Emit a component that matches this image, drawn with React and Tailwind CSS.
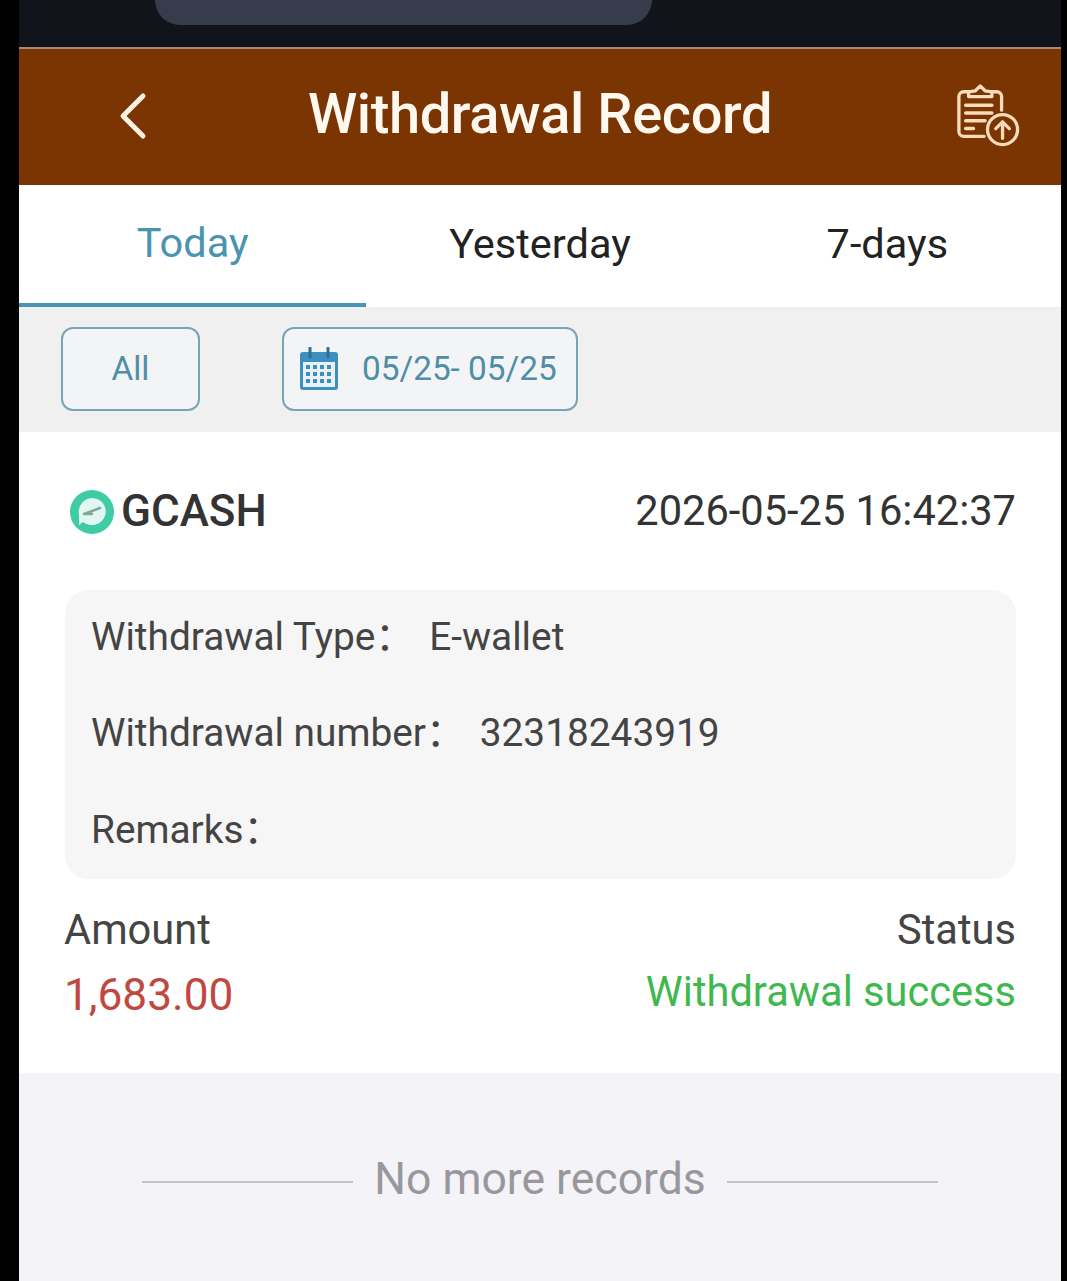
export default function App() {
  return (
    <div className="w-[1067px] h-[1281px] bg-black overflow-hidden flex font-['Roboto',sans-serif]">
      <div className="ml-[19px] w-[1042px] h-full flex flex-col">
        <div className="h-[49px] bg-[#11141a] flex flex-col border-b-2 border-[#a98a72]">
          <div className="ml-[136px] w-[497px] h-[25px] bg-[#363c4c] rounded-b-[40px]" />
        </div>
        <header className="h-[136px] bg-[#7a3503] flex items-center justify-between pl-[97px] pr-[41px] relative">
          <svg width="36" height="50" viewBox="0 0 36 50" fill="none" stroke="#fff4e6" strokeWidth="5" strokeLinecap="round" strokeLinejoin="round" className="-mt-[3px]">
            <path d="M27 5 L7 25 L27 45" />
          </svg>
          <h1 className="absolute left-0 right-0 text-center text-[#fff8ee] text-[56px] leading-[56px] font-medium tracking-[-0.4px] -mt-[7px]">Withdrawal Record</h1>
          <svg width="64" height="64" viewBox="0 0 66 66" fill="none" stroke="#f7dcbc" strokeWidth="3.4" strokeLinecap="round" strokeLinejoin="round" className="-mt-[2px]">
            <path d="M13 8 h-5 a5 5 0 0 0 -5 5 v36 a5 5 0 0 0 5 5 h21" />
            <path d="M37 8 h5 a5 5 0 0 1 5 5 v14" />
            <path d="M13 13 h24 v-5 l-7 -1 l-5 -5 l-5 5 l-7 1 z" />
            <path d="M10 22 h27 M10 30 h27 M10 38 h20 M10 46 h8" strokeWidth="3.6" />
            <circle cx="48" cy="47" r="15.5" />
            <path d="M48 56 v-17 M41 46 l7 -7 l7 7" />
          </svg>
        </header>
        <nav className="h-[122px] bg-white grid grid-cols-3 text-[41.5px] text-[#222222]">
          <div className="flex items-center justify-center border-b-[4px] border-[#4b93b4] text-[#4a94af] pb-[1px]">Today</div>
          <div className="flex items-center justify-center pb-[3px]">Yesterday</div>
          <div className="flex items-center justify-center pb-[3px]">7-days</div>
        </nav>
        <div className="h-[125px] bg-[#f0f0f0] flex items-center pl-[42px] gap-[82px] text-[#4f8ea6] text-[33.3px] pb-[2px]">
          <div className="w-[139px] h-[84px] border-2 border-[#78a5b5] rounded-[12px] flex items-center justify-center bg-[#f2f4f5]">All</div>
          <div className="w-[296px] h-[84px] border-2 border-[#78a5b5] rounded-[12px] flex items-center pl-[15px] gap-[23px] bg-[#f2f4f5]">
            <svg width="40" height="44" viewBox="0 0 40 44" className="shrink-0">
              <rect x="1" y="5" width="38" height="38" rx="3" fill="#3c8fbe" />
              <rect x="4" y="15" width="32" height="25" fill="#e8f3f9" />
              <path d="M11 1 v9 M29 1 v9" stroke="#2f6f96" strokeWidth="3" strokeLinecap="round" />
              <g fill="#3c8fbe">
                <rect x="7" y="18" width="4" height="4" /><rect x="14" y="18" width="4" height="4" /><rect x="21" y="18" width="4" height="4" /><rect x="28" y="18" width="4" height="4" />
                <rect x="7" y="25" width="4" height="4" /><rect x="14" y="25" width="4" height="4" /><rect x="21" y="25" width="4" height="4" /><rect x="28" y="25" width="4" height="4" />
                <rect x="7" y="32" width="4" height="4" /><rect x="14" y="32" width="4" height="4" /><rect x="21" y="32" width="4" height="4" /><rect x="28" y="32" width="4" height="4" />
              </g>
            </svg>
            <span className="whitespace-nowrap">05/25- 05/25</span>
          </div>
        </div>
        <main className="h-[641px] bg-white pl-[46px] pr-[45px] flex flex-col">
          <div className="h-[158px] flex items-center justify-between">
            <div className="flex items-center gap-[6px]">
              <svg width="46" height="46" viewBox="0 0 46 46" className="shrink-0 ml-[4px] mt-[1px]">
                <circle cx="23" cy="23" r="22" fill="#3fcba6" />
                <path d="M23 9 a14 13.5 0 1 1 -9 24 l-4 3 l0 -10 a14 14 0 0 1 13 -17 z" fill="#e2f7f1" />
                <path d="M15 25 l16 -6 M15 25 l8 0" stroke="#7fa8a0" strokeWidth="2.5" strokeLinecap="round" />
              </svg>
              <span className="text-[44px] font-medium text-[#333333] leading-none">GCASH</span>
            </div>
            <span className="text-[41.6px] text-[#333333] leading-none">2026-05-25 16:42:37</span>
          </div>
          <div className="h-[289px] bg-[#f6f6f6] rounded-[24px] pl-[26px] pr-[27px] flex flex-col text-[38.8px] text-[#444444] font-['Roboto','Noto_Sans_CJK_SC',sans-serif]">
            <div className="h-[95px] flex items-center"><span>Withdrawal Type：</span><span className="ml-[15px]">E-wallet</span></div>
            <div className="h-[97px] flex items-center"><span>Withdrawal number：</span><span className="ml-[15px]">32318243919</span></div>
            <div className="h-[97px] flex items-center"><span>Remarks：</span></div>
          </div>
          <div className="flex justify-between mt-[27px] text-[41.6px] leading-[48px]">
            <div className="flex flex-col -ml-[1px]">
              <span className="text-[#444444]">Amount</span>
              <span className="text-[#c0493f] text-[44.2px] leading-[52px] mt-[15px]">1,683.00</span>
            </div>
            <div className="flex flex-col items-end">
              <span className="text-[#444444]">Status</span>
              <span className="text-[#3fb84f] mt-[14px]">Withdrawal success</span>
            </div>
          </div>
        </main>
        <footer className="flex-1 bg-[#f3f3f8] flex items-start justify-center pt-[78px] gap-[21px]">
          <div className="w-[211px] h-[2px] bg-[#c4c4c8] mt-[30px]" />
          <span className="text-[44.5px] leading-[56px] text-[#98989c]">No more records</span>
          <div className="w-[211px] h-[2px] bg-[#c4c4c8] mt-[30px]" />
        </footer>
      </div>
    </div>
  );
}
